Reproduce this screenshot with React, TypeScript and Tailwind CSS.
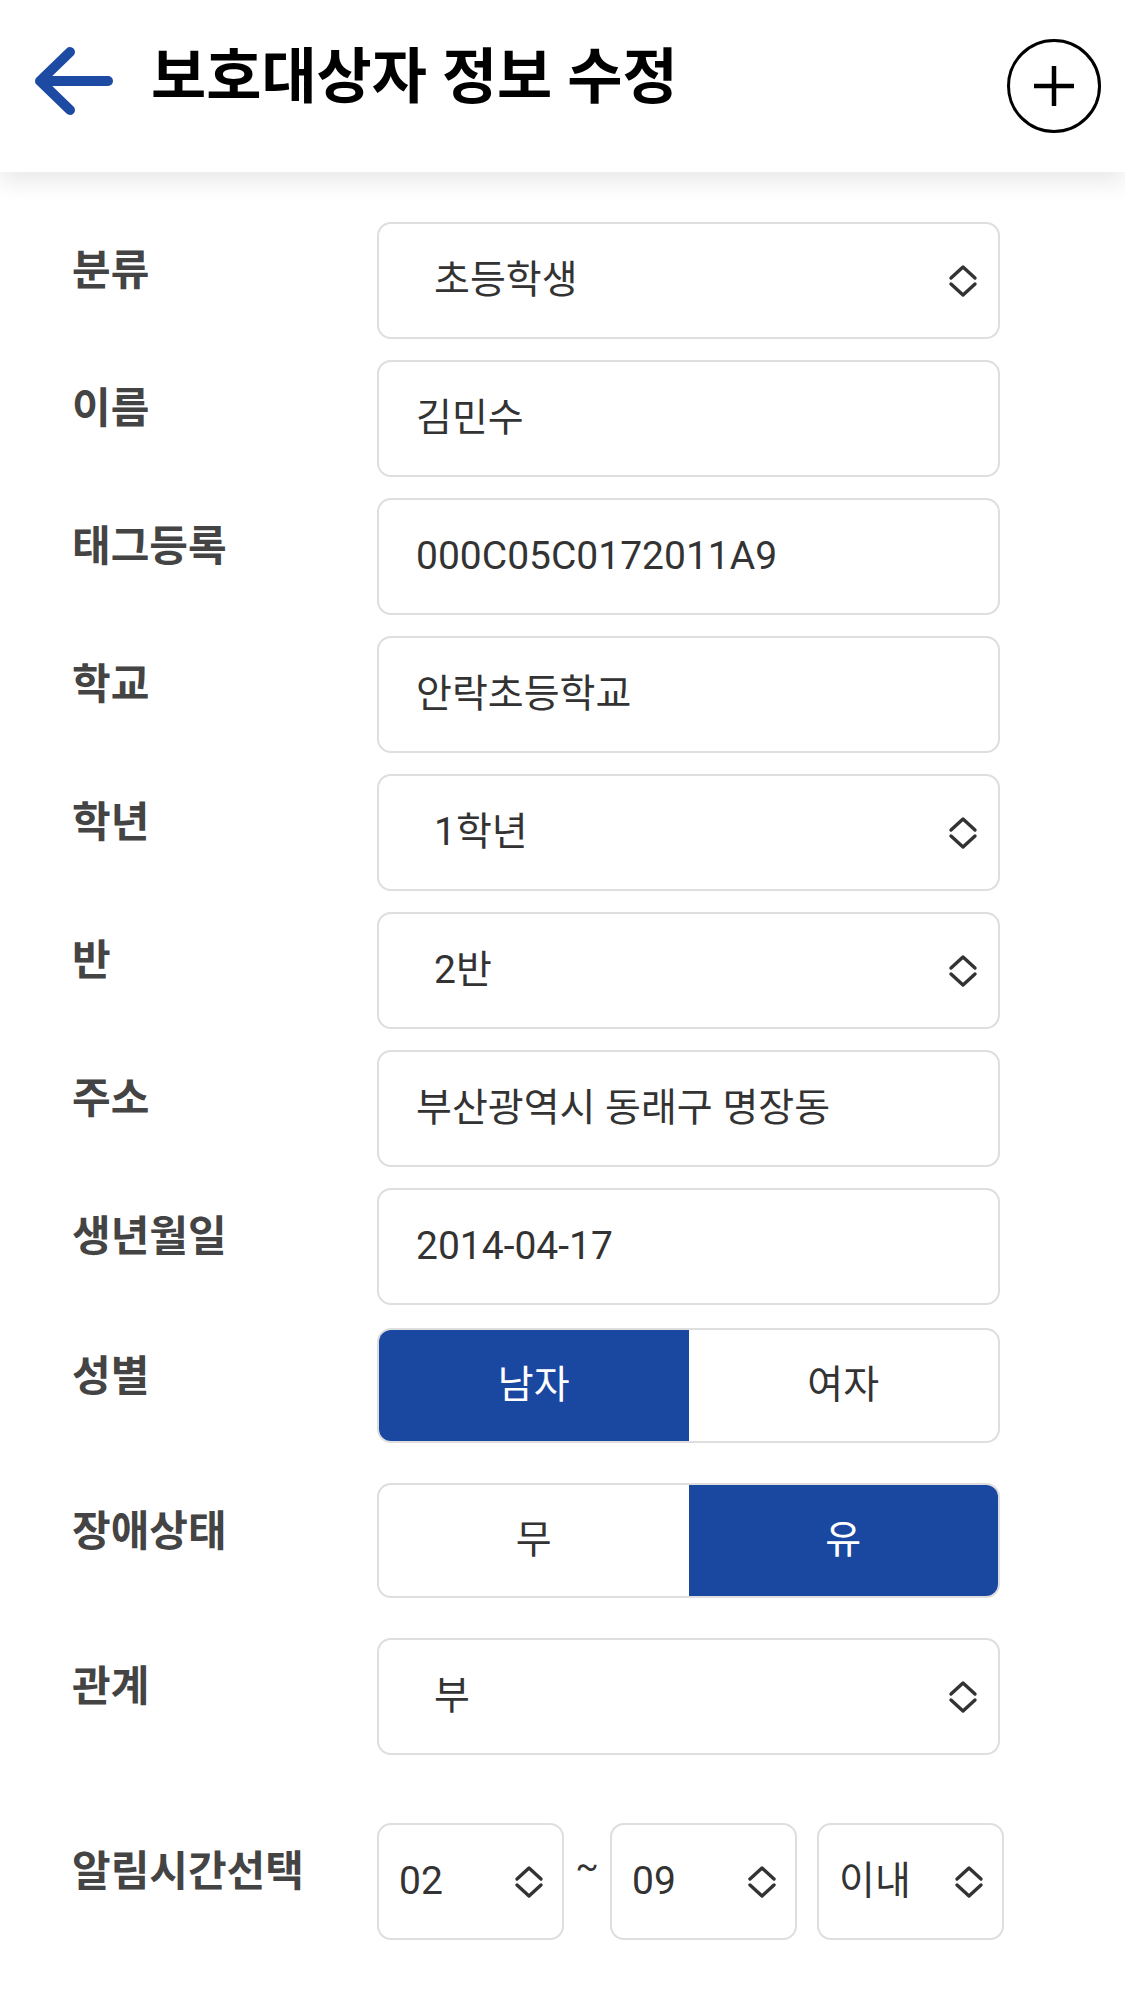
import React from 'react';

const BLUE = 'bg-[#1a47a0]';

function Chevrons() {
  return (
    <svg width="30" height="34" viewBox="0 0 30 34" fill="none" className="shrink-0">
      <path d="M3 14 L15 3 L27 14" stroke="#333" strokeWidth="3.4" strokeLinecap="round" strokeLinejoin="round" />
      <path d="M3 20 L15 31 L27 20" stroke="#333" strokeWidth="3.4" strokeLinecap="round" strokeLinejoin="round" />
    </svg>
  );
}

const boxBase = 'h-[117px] w-[623px] rounded-[14px] border-2 border-[#dedede] bg-white flex items-center';

function Row({ label, children, className = '' }: { label: string; children: React.ReactNode; className?: string }) {
  return (
    <div className={`flex items-start ${className}`}>
      <div className="w-[305px] pt-[28px] text-[42px] leading-none font-bold text-[#444]">{label}</div>
      {children}
    </div>
  );
}

function Select({ value }: { value: string }) {
  return (
    <div className={`${boxBase} pl-[55px] pr-[20px] justify-between`}>
      <span className="text-[39px] text-[#333]">{value}</span>
      <Chevrons />
    </div>
  );
}

function Input({ value }: { value: string }) {
  return (
    <div className={`${boxBase} pl-[37px]`}>
      <span className="text-[39px] text-[#333]">{value}</span>
    </div>
  );
}

function Toggle({ left, right, active }: { left: string; right: string; active: 'left' | 'right' }) {
  return (
    <div className="h-[115px] w-[623px] rounded-[14px] border-2 border-[#dedede] overflow-hidden flex bg-white">
      <div className={`flex-1 flex items-center justify-center text-[39px] ${active === 'left' ? `${BLUE} text-white` : 'text-[#333]'}`}>
        {left}
      </div>
      <div className={`flex-1 flex items-center justify-center text-[39px] ${active === 'right' ? `${BLUE} text-white` : 'text-[#333]'}`}>
        {right}
      </div>
    </div>
  );
}

function SmallSelect({ value }: { value: string }) {
  return (
    <div className="h-[117px] w-[187px] rounded-[14px] border-2 border-[#dedede] bg-white flex items-center justify-between pl-[20px] pr-[18px]">
      <span className="text-[39px] text-[#333]">{value}</span>
      <Chevrons />
    </div>
  );
}

export default function App() {
  return (
    <div
      className="w-[1125px] min-h-[2000px] bg-white"
      style={{ fontFamily: 'Roboto, "Noto Sans CJK KR", sans-serif' }}
    >
      {/* header */}
      <header className="relative h-[172px] flex items-center bg-white shadow-[0_10px_22px_rgba(0,0,0,0.09)]">
        <svg width="86" height="82" viewBox="0 0 86 82" fill="none" className="ml-[30px] mb-[10px] shrink-0">
          <path d="M40 12 L10 41 L40 70" stroke="#1d4ba3" strokeWidth="10" strokeLinecap="round" strokeLinejoin="round" />
          <path d="M12 41 H78" stroke="#1d4ba3" strokeWidth="10" strokeLinecap="round" />
        </svg>
        <h1 className="ml-[35px] mb-[16px] text-[60px] font-bold text-black leading-none">보호대상자 정보 수정</h1>
        <div className="ml-auto mr-[24px] w-[94px] h-[94px] rounded-full border-[3px] border-black flex items-center justify-center">
          <svg width="44" height="44" viewBox="0 0 44 44">
            <path d="M22 2 V42 M2 22 H42" stroke="#000" strokeWidth="4.5" />
          </svg>
        </div>
      </header>

      {/* form */}
      <div className="pl-[72px] pt-[50px] flex flex-col">
        <div className="flex flex-col gap-[21px]">
          <Row label="분류"><Select value="초등학생" /></Row>
          <Row label="이름"><Input value="김민수" /></Row>
          <Row label="태그등록"><Input value="000C05C0172011A9" /></Row>
          <Row label="학교"><Input value="안락초등학교" /></Row>
          <Row label="학년"><Select value="1학년" /></Row>
          <Row label="반"><Select value="2반" /></Row>
          <Row label="주소"><Input value="부산광역시 동래구 명장동" /></Row>
          <Row label="생년월일"><Input value="2014-04-17" /></Row>
        </div>
        <Row label="성별" className="mt-[23px]">
          <Toggle left="남자" right="여자" active="left" />
        </Row>
        <Row label="장애상태" className="mt-[40px]">
          <Toggle left="무" right="유" active="right" />
        </Row>
        <Row label="관계" className="mt-[40px]"><Select value="부" /></Row>
        <Row label="알림시간선택" className="mt-[68px]">
          <div className="flex items-center">
            <SmallSelect value="02" />
            <span className="w-[46px] text-center text-[34px] text-[#333] mb-[30px]">~</span>
            <SmallSelect value="09" />
            <div className="w-[20px]" />
            <SmallSelect value="이내" />
          </div>
        </Row>
      </div>
    </div>
  );
}
